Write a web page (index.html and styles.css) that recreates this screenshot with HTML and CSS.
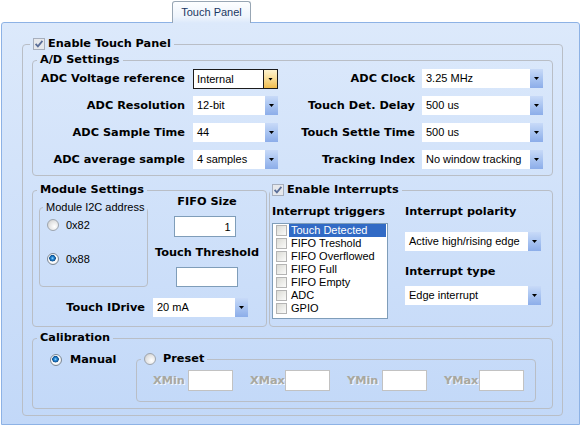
FILE: index.html
```html
<!DOCTYPE html>
<html lang="en">
<head>
    <meta charset="UTF-8">
    <meta name="viewport" content="width=device-width, initial-scale=1.0">
    <title>Touch Panel</title>
    <link rel="stylesheet" href="styles.css">
</head>
<body>

<div class="tabs">
    <div class="tab">Touch Panel</div>
</div>

<div class="panel">
    <fieldset class="group outer">
        <legend><svg class="chk" width="12" height="12" viewBox="0 0 12 12"><rect x="0.5" y="0.5" width="11" height="11" fill="#e6e8ec" stroke="#a7afbd"/><path d="M2.6 5.8 L4.9 8.4 L9.4 2.9" fill="none" stroke="#5a6e98" stroke-width="1.8"/></svg>Enable Touch Panel</legend>
        <div class="outer-body">

            <fieldset class="group">
                <legend>A/D Settings</legend>
                <div class="ad-grid">
                    <span class="lbl">ADC Voltage reference</span>
                    <div class="combo focus"><span>Internal</span><b></b></div>
                    <span class="lbl lbl-r">ADC Clock</span>
                    <div class="combo"><span>3.25 MHz</span><b></b></div>

                    <span class="lbl">ADC Resolution</span>
                    <div class="combo"><span>12-bit</span><b></b></div>
                    <span class="lbl lbl-r">Touch Det. Delay</span>
                    <div class="combo"><span>500 us</span><b></b></div>

                    <span class="lbl">ADC Sample Time</span>
                    <div class="combo"><span>44</span><b></b></div>
                    <span class="lbl lbl-r">Touch Settle Time</span>
                    <div class="combo"><span>500 us</span><b></b></div>

                    <span class="lbl">ADC average sample</span>
                    <div class="combo"><span>4 samples</span><b></b></div>
                    <span class="lbl lbl-r">Tracking Index</span>
                    <div class="combo"><span>No window tracking</span><b></b></div>
                </div>
            </fieldset>

            <div class="mid">
                <fieldset class="group module">
                    <legend>Module Settings</legend>
                    <div class="module-body">
                        <div class="module-top">
                            <fieldset class="group i2c">
                                <legend>Module I2C address</legend>
                                <div class="i2c-body">
                                    <div class="opt"><span class="radio"></span>0x82</div>
                                    <div class="opt"><span class="radio on"></span>0x88</div>
                                </div>
                            </fieldset>
                            <div class="fifo">
                                <div class="cap">FIFO Size</div>
                                <input class="field fifo-size" type="text" value="1">
                                <div class="cap threshold">Touch Threshold</div>
                                <input class="field threshold-field" type="text" value="">
                            </div>
                        </div>
                        <div class="idrive">
                            <span class="lbl">Touch IDrive</span>
                            <div class="combo"><span>20 mA</span><b></b></div>
                        </div>
                    </div>
                </fieldset>

                <fieldset class="group irq">
                    <legend><svg class="chk" width="12" height="12" viewBox="0 0 12 12"><rect x="0.5" y="0.5" width="11" height="11" fill="#e6e8ec" stroke="#a7afbd"/><path d="M2.6 5.8 L4.9 8.4 L9.4 2.9" fill="none" stroke="#5a6e98" stroke-width="1.8"/></svg>Enable Interrupts</legend>
                    <div class="irq-body">
                        <div class="triggers">
                            <div class="cap">Interrupt triggers</div>
                            <ul class="list">
                                <li><i></i><span class="sel">Touch Detected</span></li>
                                <li><i></i><span>FIFO Treshold</span></li>
                                <li><i></i><span>FIFO Overflowed</span></li>
                                <li><i></i><span>FIFO Full</span></li>
                                <li><i></i><span>FIFO Empty</span></li>
                                <li><i></i><span>ADC</span></li>
                                <li><i></i><span>GPIO</span></li>
                            </ul>
                        </div>
                        <div class="polarity">
                            <div class="cap">Interrupt polarity</div>
                            <div class="combo"><span>Active high/rising edge</span><b></b></div>
                            <div class="cap">Interrupt type</div>
                            <div class="combo"><span>Edge interrupt</span><b></b></div>
                        </div>
                    </div>
                </fieldset>
            </div>

            <fieldset class="group calib">
                <legend>Calibration</legend>
                <div class="calib-body">
                    <div class="manual"><span class="radio on"></span>Manual</div>
                    <fieldset class="group preset">
                        <legend><span class="radio"></span>Preset</legend>
                        <div class="preset-body">
                            <div class="pair"><span class="dim">XMin</span><input class="field small" type="text" disabled></div>
                            <div class="pair"><span class="dim">XMax</span><input class="field small" type="text" disabled></div>
                            <div class="pair"><span class="dim">YMin</span><input class="field small" type="text" disabled></div>
                            <div class="pair"><span class="dim">YMax</span><input class="field small" type="text" disabled></div>
                        </div>
                    </fieldset>
                </div>
            </fieldset>

        </div>
    </fieldset>
</div>

</body>
</html>
```

FILE: styles.css
```css
body {
    margin: 0;
    background: #fff;
    font-family: "Liberation Sans", Arial, sans-serif;
    font-size: 11px;
    color: #000;
}
.tabs {
    display: flex;
    align-items: flex-end;
    height: 22px;
    padding-left: 172px;
}
.tab {
    position: relative;
    z-index: 1;
    box-sizing: border-box;
    width: 79px;
    height: 22px;
    margin-bottom: -1px;
    border: 1px solid #98a6b4;
    border-bottom: none;
    border-radius: 3px 3px 0 0;
    background: linear-gradient(#fdfeff, #eef4fc 70%, #dce9fb);
    color: #1a3763;
    line-height: 20px;
    text-align: center;
}
.panel {
    box-sizing: border-box;
    width: 579px;
    height: 403px;
    margin-left: 1px;
    padding: 14px 0 0 20px;
    border: 1px solid #8db2e5;
    border-radius: 3px 3px 0 0;
    background: linear-gradient(#dce9fb, #c2d8f8);
}

.group {
    margin: 0;
    padding: 0;
    min-width: 0;
    border: 1px solid #b9bec6;
    border-radius: 4px;
}
.group > legend {
    margin-left: 4px;
    padding: 0 3px;
    line-height: 14px;
    white-space: nowrap;
}
legend, .lbl, .cap, .manual, .dim {
    font-family: "DejaVu Sans", Verdana, sans-serif;
    font-size: 11.3px;
    font-weight: bold;
}
.chk {
    vertical-align: top;
    margin: 1px 3px 0 0;
}

.outer {
    box-sizing: border-box;
    width: 541px;
}
.outer > legend {
    margin-left: 7px;
}
.outer-body {
    padding: 2px 9px 6px;
}

.ad-grid {
    display: grid;
    grid-template-columns: 160px 85px 144px 121px;
    grid-auto-rows: 19px;
    row-gap: 8px;
    padding: 2px 0 6px;
}
.lbl {
    line-height: 19px;
    white-space: nowrap;
    text-align: right;
    padding-right: 8px;
}
.lbl-r {
    padding-right: 7px;
}

.combo {
    display: flex;
    box-sizing: border-box;
    height: 19px;
    background: #fff;
}
.combo span {
    flex: 1;
    padding-left: 4px;
    line-height: 19px;
    white-space: nowrap;
    overflow: hidden;
}
.combo b {
    display: flex;
    align-items: center;
    justify-content: center;
    width: 13px;
    background: linear-gradient(#c8daf8, #a9c4f1 50%, #8cade9);
}
.combo b::after {
    content: "";
    width: 5px;
    height: 3px;
    background: #000;
    clip-path: polygon(0 0, 100% 0, 50% 100%);
}
.combo.focus {
    height: 20px;
    border: 1px solid #1c1c1c;
}
.combo.focus span {
    padding-left: 3px;
    line-height: 18px;
}
.combo.focus b {
    border-left: 1px solid #1c1c1c;
    background: linear-gradient(#fdf3d0, #f8dc95 50%, #f0bc4e);
}

.field {
    box-sizing: border-box;
    width: 62px;
    height: 21px;
    margin: 0;
    padding: 0 4px 0 0;
    border: 1px solid #7f9db9;
    background: #fff;
    font-family: "Liberation Sans", Arial, sans-serif;
    font-size: 11px;
    text-align: right;
    outline: none;
}

.radio {
    display: inline-block;
    flex: none;
    box-sizing: border-box;
    width: 12px;
    height: 12px;
    border: 1px solid #9ea5ae;
    border-radius: 50%;
    background: radial-gradient(circle at 65% 65%, #fff, #e4e4e4 55%, #c4c4c4);
}
.radio.on {
    border-color: #7d8894;
    background: radial-gradient(circle at 45% 42%, #a6e2ff 0, #2b8edc 1.3px, #0d4f8f 3px, #e6ebf0 3.5px, #fff 4.2px, #c9cdd2 100%);
}

.mid {
    display: flex;
    gap: 2px;
    margin-top: 7px;
}
.module {
    flex: none;
    box-sizing: border-box;
    width: 235px;
}
.module-body {
    padding: 4px 0 9px;
}
.module-top {
    display: flex;
    align-items: flex-start;
}
.i2c {
    flex: none;
    box-sizing: border-box;
    width: 109px;
    margin-left: 6px;
}
.i2c > legend {
    margin-left: 3px;
    font-family: "Liberation Sans", Arial, sans-serif;
    font-size: 11px;
    font-weight: normal;
    line-height: 13px;
}
.i2c-body {
    padding: 4px 0 21px 7px;
}
.opt {
    display: flex;
    align-items: center;
    height: 13px;
}
.opt + .opt {
    margin-top: 21px;
}
.opt .radio {
    margin-right: 7px;
}
.fifo {
    flex: 1;
    display: flex;
    flex-direction: column;
    align-items: center;
    margin-top: -6px;
}
.cap {
    line-height: 14px;
    white-space: nowrap;
}
.fifo-size {
    margin: 7px 5px 0 0;
}
.threshold {
    margin-top: 9px;
}
.threshold-field {
    height: 20px;
    margin-top: 7px;
}
.idrive {
    display: flex;
    margin-top: 11px;
}
.idrive .lbl {
    width: 112px;
    padding-right: 8px;
}
.idrive .combo {
    width: 95px;
}

.irq {
    flex: 1;
}
.irq > legend {
    margin-left: 0;
    padding: 0 3px 0 2px;
}
.irq-body {
    display: flex;
    gap: 17px;
    padding: 8px 0 0 2px;
}
.triggers {
    width: 116px;
}
.list {
    box-sizing: border-box;
    height: 96px;
    margin: 4px 0 0;
    padding: 0 0 3px;
    list-style: none;
    border: 1px solid #7f9db9;
    background: #fff;
}
.list li {
    display: flex;
    align-items: center;
    height: 13px;
}
.list i {
    box-sizing: border-box;
    width: 11px;
    height: 11px;
    margin: 0 2px 0 3px;
    border: 1px solid #b4b4b4;
    background: linear-gradient(135deg, #dbdbd5, #fbfbfa);
}
.list span {
    flex: 1;
    margin-right: 1px;
    padding-left: 2px;
    line-height: 13px;
    white-space: nowrap;
}
.list .sel {
    background: #316ac5;
    color: #fff;
}
.polarity {
    width: 136px;
}
.polarity .combo {
    margin-top: 13px;
}
.polarity .combo + .cap {
    margin-top: 14px;
}
.polarity .cap + .combo + .cap + .combo {
    margin-top: 7px;
}

.calib {
    margin-top: 4px;
}
.calib-body {
    display: flex;
    align-items: flex-start;
    padding: 8px 0 6px;
}
.manual {
    display: flex;
    align-items: center;
    box-sizing: border-box;
    width: 103px;
    padding-left: 17px;
    line-height: 14px;
}
.manual .radio {
    margin-right: 8px;
}
.preset {
    box-sizing: border-box;
    width: 400px;
    margin-top: -1px;
}
.preset > legend .radio {
    vertical-align: top;
    margin: 1px 7px 0 0;
}
.preset-body {
    display: grid;
    grid-template-columns: repeat(4, 97px);
    padding: 4px 0 10px 16px;
}
.pair {
    display: flex;
    align-items: center;
    justify-content: space-between;
    width: 80px;
}
.dim {
    color: #a9a89f;
    text-shadow: 1px 1px 0 #f2f7fe;
}
.small {
    width: 45px;
    border-color: #c2c2c2;
}
```
